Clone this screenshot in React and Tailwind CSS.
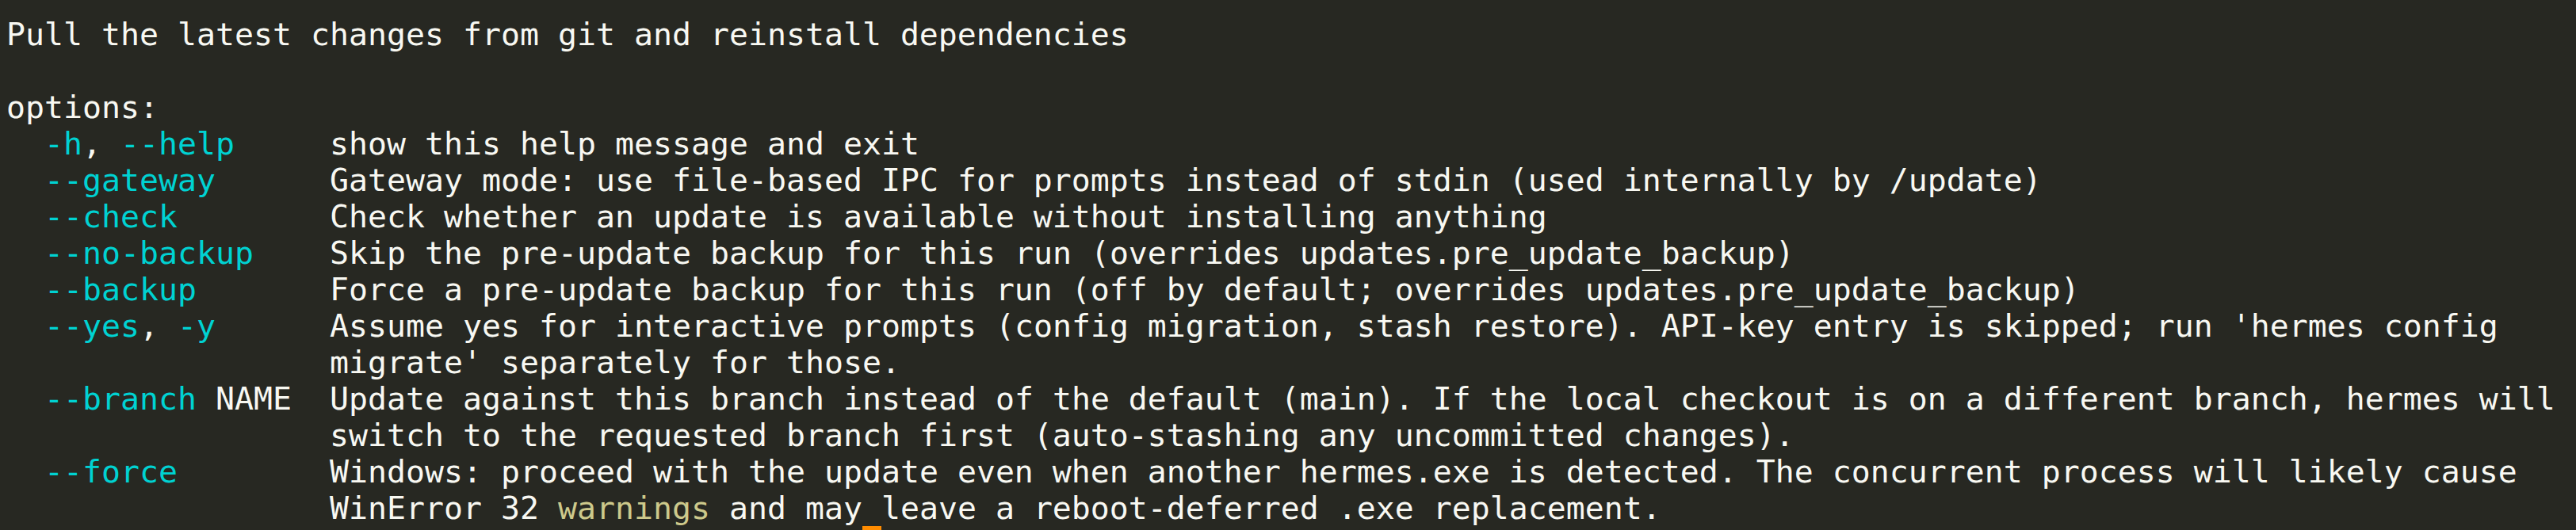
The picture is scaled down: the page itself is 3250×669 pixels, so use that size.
import React from "react";

const C = ({ children }) => <span className="text-[#00d2d2]">{children}</span>;

const opts = [
  [<><C>-h</C>, <C>--help</C></>, "     ", "show this help message and exit"],
  [<C>--gateway</C>, "      ", "Gateway mode: use file-based IPC for prompts instead of stdin (used internally by /update)"],
  [<C>--check</C>, "        ", "Check whether an update is available without installing anything"],
  [<C>--no-backup</C>, "    ", "Skip the pre-update backup for this run (overrides updates.pre_update_backup)"],
  [<C>--backup</C>, "       ", "Force a pre-update backup for this run (off by default; overrides updates.pre_update_backup)"],
  [<><C>--yes</C>, <C>-y</C></>, "      ", "Assume yes for interactive prompts (config migration, stash restore). API-key entry is skipped; run 'hermes config"],
  [null, "", "migrate' separately for those."],
  [<><C>--branch</C> NAME</>, "  ", "Update against this branch instead of the default (main). If the local checkout is on a different branch, hermes will"],
  [null, "", "switch to the requested branch first (auto-stashing any uncommitted changes)."],
  [<C>--force</C>, "        ", "Windows: proceed with the update even when another hermes.exe is detected. The concurrent process will likely cause"],
];

export default function App() {
  return (
    <div
      className="w-[3250px] h-[669px] overflow-hidden bg-[#272822] text-[#f8f8f2] pl-[8px] pt-[20px] text-[39.86px] leading-[46px]"
      style={{ fontFamily: '"DejaVu Sans Mono", monospace' }}
    >
      <div className="whitespace-pre">Pull the latest changes from git and reinstall dependencies</div>
      <div className="whitespace-pre"> </div>
      <div className="whitespace-pre">options:</div>
      {opts.map((o, i) => (
        <div key={i} className="whitespace-pre">
          {o[0] ? <>{"  "}{o[0]}{o[1]}</> : "                 "}
          {o[2]}
        </div>
      ))}
      <div className="whitespace-pre">
        {"                 "}WinError 32 <span className="text-[#cdc98b]">warnings</span> and may leave a reboot-deferred .exe replacement.
      </div>
      <div className="whitespace-pre flex">
        <span>{"                                             "}</span>
        <span className="inline-block w-[24px] h-[46px] bg-[#ff8c00]"></span>
      </div>
    </div>
  );
}
